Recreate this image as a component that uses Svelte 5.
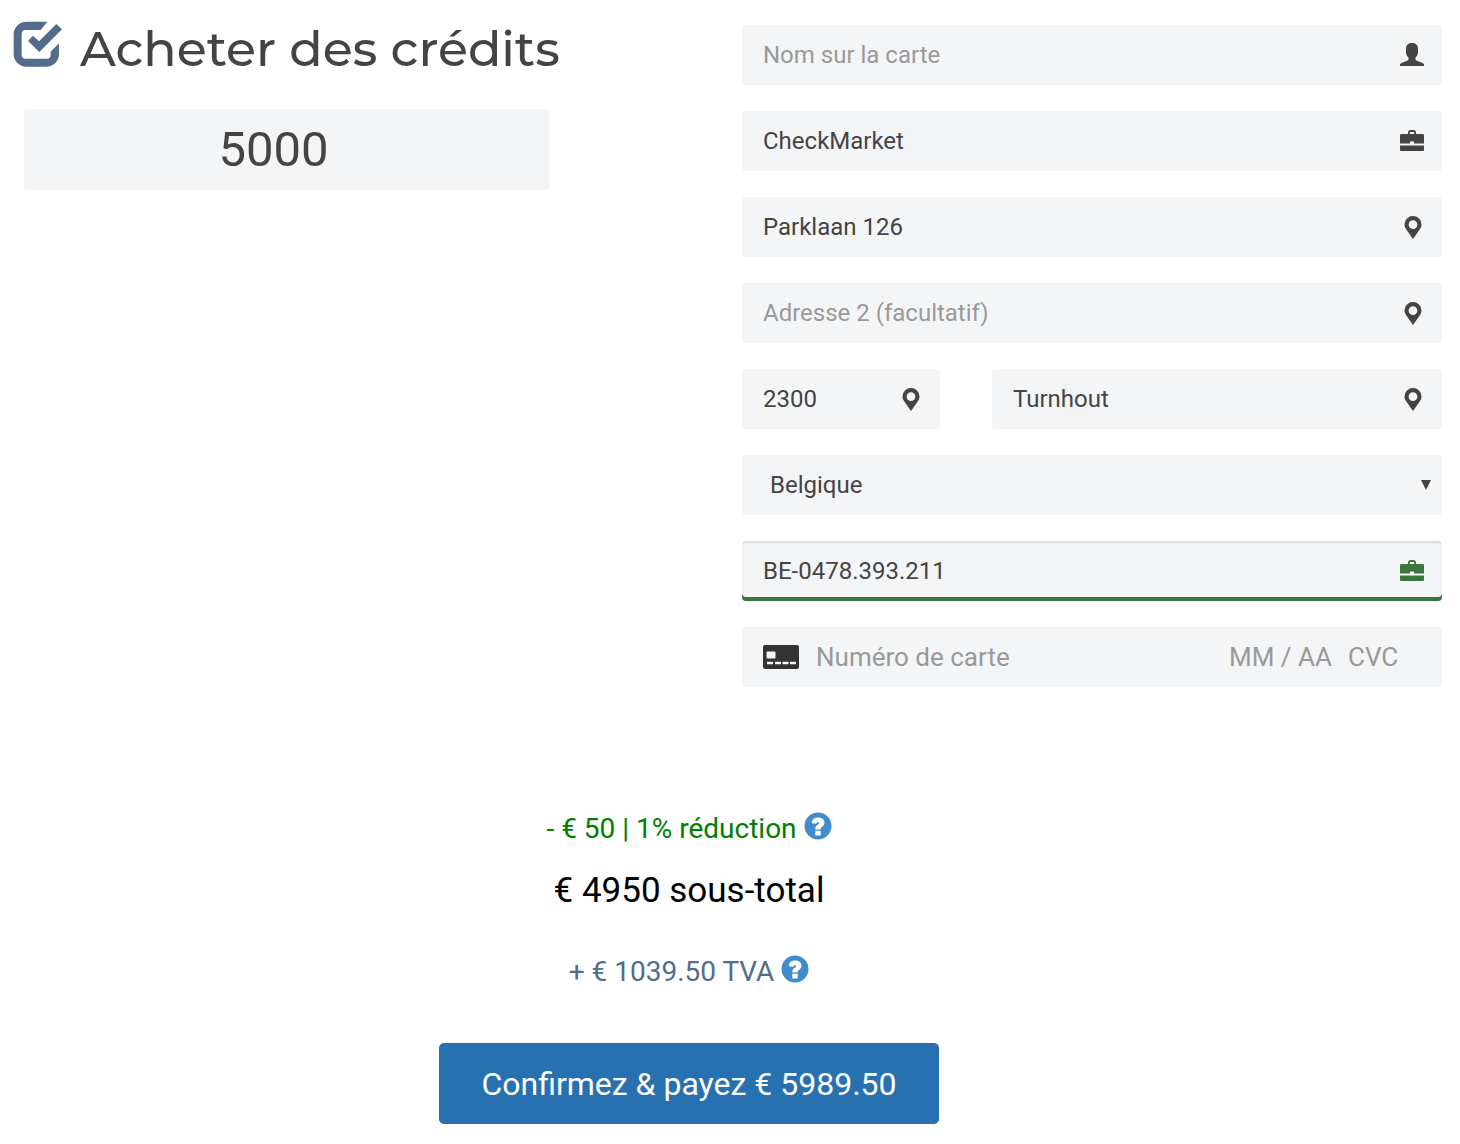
<script lang="ts">
  /**
   * BuyCredits — credit amount, billing details and order summary
   */

  const VAT_RATE = 0.21;
  const DISCOUNT_RATE = 0.01;

  let credits = $state('5000');

  let billing = $state({
    cardName: '',
    company: 'CheckMarket',
    address: 'Parklaan 126',
    address2: '',
    zip: '2300',
    city: 'Turnhout',
    country: 'BE',
    vat: 'BE-0478.393.211',
  });

  let card = $state({ number: '', expiry: '', cvc: '' });

  const countries = [
    { code: 'BE', name: 'Belgique' },
    { code: 'FR', name: 'France' },
    { code: 'LU', name: 'Luxembourg' },
    { code: 'NL', name: 'Pays-Bas' },
  ];

  let amount = $derived(Number(credits) || 0);
  let discount = $derived(amount * DISCOUNT_RATE);
  let subtotal = $derived(amount - discount);
  let vat = $derived(subtotal * VAT_RATE);
  let total = $derived(subtotal + vat);
</script>

{#snippet user()}
  <svg class="icon" viewBox="0 0 24 24" aria-hidden="true">
    <path d="M12 0C8.500 0 6 2 6 5.500V9c0 2.500 1 4.500 2.500 5.500v1.500c0 1-.5 1.300-1.500 1.800L1.500 20C.5 20.500 0 21 0 22v1h24v-1c0-1-.5-1.500-1.500-2L17 17.800c-1-.5-1.500-.8-1.500-1.800v-1.500C17 13.500 18 11.500 18 9V5.500C18 2 15.500 0 12 0z" />
  </svg>
{/snippet}

{#snippet briefcase()}
  <svg class="icon" viewBox="0 0 24 24" aria-hidden="true">
    <path fill-rule="evenodd" d="M8 5V3.500C8 2 9 1 10.500 1h3C15 1 16 2 16 3.500V5h6.500C23.500 5 24 5.500 24 6.500V14.500H14v-2h-4v2H0V6.500C0 5.500.5 5 1.500 5zM9.800 5h4.400V3H9.800z" />
    <path d="M0 16.500h24v4c0 1-.5 1.500-1.500 1.500h-21C.5 22 0 21.500 0 20.500z" />
  </svg>
{/snippet}

{#snippet pin()}
  <svg class="icon" viewBox="0 0 24 24" aria-hidden="true">
    <path fill-rule="evenodd" d="M13 1a8.500 8.500 0 0 0-8.500 8.500c0 2 .8 3.500 1.800 5L13 24l6.700-9.500c1-1.500 1.800-3 1.800-5A8.500 8.500 0 0 0 13 1zm0 4.200a4.400 4.400 0 1 1 0 8.800 4.400 4.400 0 0 1 0-8.800z" />
  </svg>
{/snippet}

{#snippet help(label: string)}
  <button type="button" class="help" aria-label={label}>
    <svg viewBox="0 0 28 28" aria-hidden="true">
      <circle cx="14" cy="14" r="13.500" fill="#428bca" />
      <path fill="#fff" d="M7.800 11.200C7.800 7.500 10.300 5.400 14 5.400c3.800 0 6.500 1.900 6.500 5.200 0 2.200-1.200 3.500-2.800 4.600-.8.600-1 .9-1 1.800v.4h-5.400v-.6c0-2 .8-2.900 2.400-4 .9-.6 1.300-1 1.300-1.600s-.4-1-1.100-1c-.9 0-1.400.5-1.400 1.500zM11.300 18.800h5.400v4.600h-5.400z" />
    </svg>
  </button>
{/snippet}

<form class="page" onsubmit={(e) => e.preventDefault()}>
  <div class="columns">
    <section class="amount">
      <h1>
        <svg class="logo" viewBox="35 34 150 138" aria-hidden="true">
          <path d="M141 36H78a38 38 0 0 0-38 38v59a38 38 0 0 0 38 38h60a38 38 0 0 0 38-38v-32l-25 25v9a12 12 0 0 1-12 12H76a12 12 0 0 1-12-12V73a12 12 0 0 1 12-12h45z" />
          <path d="M83 94l15-16 18 17 52-52 17 16-68 68z" />
        </svg>
        Acheter des crédits
      </h1>
      <input class="credits" aria-label="Nombre de crédits" inputmode="numeric" bind:value={credits} />
    </section>

    <section class="billing">
      <div class="field">
        <input aria-label="Nom sur la carte" placeholder="Nom sur la carte" bind:value={billing.cardName} />
        {@render user()}
      </div>
      <div class="field">
        <input aria-label="Société" bind:value={billing.company} />
        {@render briefcase()}
      </div>
      <div class="field">
        <input aria-label="Adresse" bind:value={billing.address} />
        {@render pin()}
      </div>
      <div class="field">
        <input aria-label="Adresse 2" placeholder="Adresse 2 (facultatif)" bind:value={billing.address2} />
        {@render pin()}
      </div>
      <div class="city-row">
        <div class="field">
          <input aria-label="Code postal" bind:value={billing.zip} />
          {@render pin()}
        </div>
        <div class="field">
          <input aria-label="Ville" bind:value={billing.city} />
          {@render pin()}
        </div>
      </div>
      <div class="field country">
        <select aria-label="Pays" bind:value={billing.country}>
          {#each countries as country}
            <option value={country.code}>{country.name}</option>
          {/each}
        </select>
        <svg class="arrow" viewBox="0 0 10 10" aria-hidden="true"><path d="M0 0h10L5 10z" /></svg>
      </div>
      <div class="field valid">
        <input aria-label="Numéro de TVA" bind:value={billing.vat} />
        {@render briefcase()}
      </div>
      <div class="field card">
        <svg class="card-icon" viewBox="0 0 36 24" aria-hidden="true">
          <rect width="36" height="24" rx="2" fill="#333" />
          <rect x="3.500" y="6.500" width="9" height="7" rx="1" fill="#f4f5f7" />
          <path d="M4 18h6m2 0h6m1.500 0h6m1.500 0h6" stroke="#f4f5f7" stroke-width="2.400" />
        </svg>
        <input class="number" aria-label="Numéro de carte" placeholder="Numéro de carte" bind:value={card.number} />
        <input class="expiry" aria-label="Date d'expiration" placeholder="MM / AA" bind:value={card.expiry} />
        <input class="cvc" aria-label="CVC" placeholder="CVC" bind:value={card.cvc} />
      </div>
    </section>
  </div>

  <section class="summary">
    <p class="discount">- € {discount} | {DISCOUNT_RATE * 100}% réduction {@render help('Aide sur la réduction')}</p>
    <p class="subtotal">€ {subtotal} sous-total</p>
    <p class="vat">+ € {vat.toFixed(2)} TVA {@render help('Aide sur la TVA')}</p>
    <button type="submit" class="pay">Confirmez &amp; payez € {total.toFixed(2)}</button>
  </section>
</form>

<style>
  :global(body) {
    background: #fff;
  }

  .page {
    font-family: Roboto, "Liberation Sans", sans-serif;
    color: #444;
  }

  .columns {
    display: grid;
    grid-template-columns: 549fr 700fr;
    column-gap: 181px;
    padding: 0 18px 0 12px;
  }

  h1 {
    display: flex;
    align-items: center;
    gap: 18px;
    height: 60px;
    margin: 18px 0 31px;
    font-family: Montserrat, Inter, sans-serif;
    font-size: 49px;
    font-weight: 500;
    color: #444;
    white-space: nowrap;
  }

  .logo {
    width: 50px;
    height: 46px;
    fill: #546c8c;
    flex-shrink: 0;
    margin-bottom: 8px;
  }

  .amount {
    display: flex;
    flex-direction: column;
    min-width: 0;
  }

  input,
  select {
    box-sizing: border-box;
    min-width: 0;
    height: 60px;
    padding: 0;
    border: none;
    background: transparent;
    color: #444;
    font-family: inherit;
    font-size: 24px;
    outline: none;
  }

  input::placeholder {
    color: #999;
    opacity: 1;
  }

  .credits {
    height: 81px;
    margin: 0 12px;
    padding-right: 26px;
    border-radius: 4px;
    background: #f4f5f7;
    font-size: 49px;
    text-align: center;
  }

  .billing {
    display: flex;
    flex-direction: column;
    gap: 26px;
    padding-top: 25px;
    min-width: 0;
  }

  .field {
    display: flex;
    align-items: center;
    box-sizing: border-box;
    height: 60px;
    padding: 0 18px 0 21px;
    border-radius: 4px;
    background: #f4f5f7;
    min-width: 0;
  }

  .field input,
  .field select {
    flex: 1;
  }

  .icon {
    width: 24px;
    height: 24px;
    fill: #444;
    flex-shrink: 0;
  }

  .city-row {
    display: grid;
    grid-template-columns: 11fr 25fr;
    gap: 52px;
  }

  .country {
    padding: 0 11px 0 28px;
  }

  .country select {
    appearance: none;
  }

  .arrow {
    width: 10px;
    height: 10px;
    fill: #444;
  }

  .valid {
    box-shadow: inset 0 -4px #3c763d, inset 0 2px 2px rgba(0, 0, 0, 0.1);
  }

  .valid .icon {
    fill: #3c763d;
  }

  .card {
    padding-right: 24px;
  }

  .card input {
    font-size: 26px;
  }

  .card-icon {
    width: 36px;
    height: 24px;
    margin-right: 17px;
    flex-shrink: 0;
  }

  .card .expiry {
    flex: 0 0 119px;
  }

  .card .cvc {
    flex: 0 0 70px;
  }

  .summary {
    display: flex;
    flex-direction: column;
    align-items: center;
    padding: 122px 82px 20px 0;
  }

  .summary p {
    margin: 0;
    line-height: 40px;
  }

  .discount,
  .vat {
    font-size: 28px;
  }

  .summary .discount {
    margin-bottom: 22px;
    color: #008000;
  }

  .subtotal {
    font-size: 35px;
    color: #000;
  }

  .summary .vat {
    margin: 41px 0 51px;
    color: #546c8c;
  }

  .help {
    width: 28px;
    height: 28px;
    padding: 0;
    border: none;
    background: none;
    cursor: pointer;
    vertical-align: -2px;
  }

  .help svg {
    display: block;
  }

  .pay {
    width: 500px;
    height: 81px;
    border: none;
    border-radius: 5px;
    background: #2871b1;
    color: #fff;
    font-family: inherit;
    font-size: 32px;
    cursor: pointer;
  }

  .pay:hover {
    background: #21609a;
  }
</style>
